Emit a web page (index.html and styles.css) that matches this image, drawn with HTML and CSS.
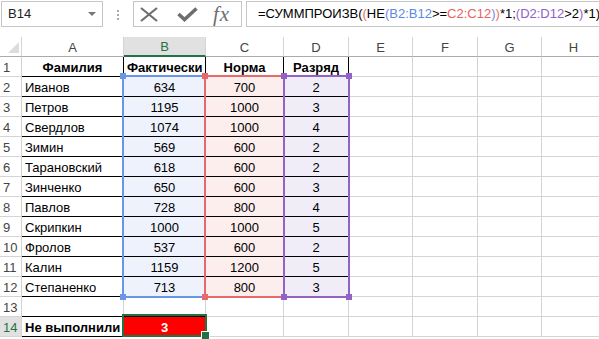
FILE: index.html
```html
<!DOCTYPE html>
<html>
<head>
  <meta charset="utf-8">
  <link rel="stylesheet" href="styles.css">
</head>
<body>
  <div class="formula-bar">
    <div class="name-box">B14<span class="drop"></span></div>
    <div class="grip"><i></i><i></i><i></i></div>
    <div class="buttons">
      <svg class="icon-x" width="18" height="15" viewBox="0 0 18 15"><path d="M1 1 L17 14 M17 1 L1 14" stroke="#6e6e6e" stroke-width="2.2" fill="none"/></svg>
      <svg class="icon-ok" width="21" height="15" viewBox="0 0 21 15"><path d="M1.5 7 L7.5 12.5 L19.5 1.5" stroke="#6e6e6e" stroke-width="3.6" fill="none"/></svg>
      <span class="fx">fx</span>
    </div>
    <div class="formula">=СУММПРОИЗВ(<span class="p1">(</span>НЕ<span class="p2">(</span><span class="rb">B2:B12</span>&gt;=<span class="rc">C2:C12</span><span class="p2">)</span><span class="p1">)</span>*1;<span class="p3">(</span><span class="rd">D2:D12</span>&gt;2<span class="p3">)</span>*1)</div>
  </div>

  <div class="sheet-wrap">
    <table class="sheet">
      <colgroup>
        <col class="w-rh"><col class="w-a"><col class="w-b"><col class="w-c"><col class="w-d">
        <col class="w-e"><col class="w-f"><col class="w-g"><col class="w-h">
      </colgroup>
      <tr>
        <th class="corner"></th><th class="col">A</th><th class="col sel">B</th><th class="col">C</th><th class="col">D</th>
        <th class="col">E</th><th class="col">F</th><th class="col">G</th><th class="col">H</th>
      </tr>
      <tr>
        <td class="rh">1</td><td class="bx b c">Фамилия</td><td class="bx b c">Фактически</td><td class="bx b c">Норма</td><td class="bx b c">Разряд</td>
        <td></td><td></td><td></td><td></td>
      </tr>
      <tr>
        <td class="rh">2</td><td class="bx">Иванов</td><td class="bx c fb">634</td><td class="bx c fc">700</td><td class="bx c fd">2</td>
        <td></td><td></td><td></td><td></td>
      </tr>
      <tr>
        <td class="rh">3</td><td class="bx">Петров</td><td class="bx c fb">1195</td><td class="bx c fc">1000</td><td class="bx c fd">3</td>
        <td></td><td></td><td></td><td></td>
      </tr>
      <tr>
        <td class="rh">4</td><td class="bx">Свердлов</td><td class="bx c fb">1074</td><td class="bx c fc">1000</td><td class="bx c fd">4</td>
        <td></td><td></td><td></td><td></td>
      </tr>
      <tr>
        <td class="rh">5</td><td class="bx">Зимин</td><td class="bx c fb">569</td><td class="bx c fc">600</td><td class="bx c fd">2</td>
        <td></td><td></td><td></td><td></td>
      </tr>
      <tr>
        <td class="rh">6</td><td class="bx">Тарановский</td><td class="bx c fb">618</td><td class="bx c fc">600</td><td class="bx c fd">2</td>
        <td></td><td></td><td></td><td></td>
      </tr>
      <tr>
        <td class="rh">7</td><td class="bx">Зинченко</td><td class="bx c fb">650</td><td class="bx c fc">600</td><td class="bx c fd">3</td>
        <td></td><td></td><td></td><td></td>
      </tr>
      <tr>
        <td class="rh">8</td><td class="bx">Павлов</td><td class="bx c fb">728</td><td class="bx c fc">800</td><td class="bx c fd">4</td>
        <td></td><td></td><td></td><td></td>
      </tr>
      <tr>
        <td class="rh">9</td><td class="bx">Скрипкин</td><td class="bx c fb">1000</td><td class="bx c fc">1000</td><td class="bx c fd">5</td>
        <td></td><td></td><td></td><td></td>
      </tr>
      <tr>
        <td class="rh">10</td><td class="bx">Фролов</td><td class="bx c fb">537</td><td class="bx c fc">600</td><td class="bx c fd">2</td>
        <td></td><td></td><td></td><td></td>
      </tr>
      <tr>
        <td class="rh">11</td><td class="bx">Калин</td><td class="bx c fb">1159</td><td class="bx c fc">1200</td><td class="bx c fd">5</td>
        <td></td><td></td><td></td><td></td>
      </tr>
      <tr>
        <td class="rh">12</td><td class="bx">Степаненко</td><td class="bx c fb">713</td><td class="bx c fc">800</td><td class="bx c fd">3</td>
        <td></td><td></td><td></td><td></td>
      </tr>
      <tr>
        <td class="rh">13</td><td class="bt"></td><td class="bt"></td><td></td><td></td>
        <td></td><td></td><td></td><td></td>
      </tr>
      <tr>
        <td class="rh sel">14</td><td class="bx b">Не выполнили</td><td class="bx red">3</td><td></td><td></td>
        <td></td><td></td><td></td><td></td>
      </tr>
    </table>

    <div class="range blue"><i class="tl"></i><i class="tr"></i><i class="bl"></i><i class="br"></i></div>
    <div class="range red-range"><i class="tl"></i><i class="tr"></i><i class="bl"></i><i class="br"></i></div>
    <div class="range purple"><i class="tl"></i><i class="tr"></i><i class="bl"></i><i class="br"></i></div>
    <div class="selection"></div>
  </div>
</body>
</html>
```

FILE: styles.css
```css
* {
  box-sizing: border-box;
}

body {
  margin: 0;
  width: 599px;
  height: 339px;
  overflow: hidden;
  background: #fff;
  font-family: "Liberation Sans", Arial, sans-serif;
  font-size: 13px;
  color: #000;
}

/* formula bar */
.formula-bar {
  display: flex;
  align-items: flex-start;
  height: 37px;
  padding: 1px 0 0 1px;
}

.name-box {
  position: relative;
  flex-shrink: 0;
  width: 102px;
  height: 26px;
  border: 1px solid #c6c6c6;
  padding-left: 6px;
  line-height: 24px;
  color: #222;
}

.drop {
  position: absolute;
  left: 86px;
  top: 10px;
  border-left: 4px solid transparent;
  border-right: 4px solid transparent;
  border-top: 4px solid #777;
}

.grip {
  flex-shrink: 0;
  width: 30px;
  display: flex;
  flex-direction: column;
  align-items: center;
  gap: 2px;
  padding-top: 9px;
}

.grip i {
  width: 2px;
  height: 2px;
  background: #a8a8a8;
}

.buttons {
  flex-shrink: 0;
  width: 109px;
  height: 26px;
  border: 1px solid #c6c6c6;
  display: flex;
  align-items: center;
}

.icon-x {
  margin-left: 6px;
}

.icon-ok {
  margin-left: 19px;
}

.fx {
  margin-left: 15px;
  font-family: "Liberation Serif", serif;
  font-style: italic;
  font-size: 21px;
  letter-spacing: 1px;
  color: #6e6e6e;
  line-height: 24px;
}

.formula {
  flex-shrink: 0;
  width: 380px;
  height: 26px;
  margin-left: 4px;
  border: 1px solid #c6c6c6;
  padding-left: 11px;
  line-height: 24px;
  white-space: nowrap;
  color: #000;
}

.p1 { color: #e46f6d; }
.p2 { color: #7f83e3; }
.p3 { color: #9a66cc; }
.rb { color: #5b88e8; }
.rc { color: #ea5f5f; }
.rd { color: #9060c8; }

/* sheet */
.sheet-wrap {
  position: relative;
}

.sheet {
  border-collapse: separate;
  border-spacing: 0;
  table-layout: fixed;
  width: 606px;
}

.w-rh { width: 22px; }
.w-a { width: 102px; }
.w-b { width: 82px; }
.w-c { width: 78px; }
.w-d { width: 65px; }
.w-e { width: 64px; }
.w-f { width: 65px; }
.w-g { width: 64px; }
.w-h { width: 64px; }

.sheet td,
.sheet th {
  height: 20px;
  padding: 2px 3px 0;
  line-height: 17px;
  border-right: 1px solid #d4d4d4;
  border-bottom: 1px solid #d4d4d4;
  white-space: nowrap;
  overflow: hidden;
  text-align: left;
  font-weight: normal;
}

.sheet th.col {
  text-align: center;
  color: #444;
  padding-top: 1px;
  border-bottom-color: #ababab;
}

.sheet th.sel {
  background: #e1e1e1;
  color: #217346;
  border-bottom: 2px solid #217346;
}

.sheet th.corner {
  position: relative;
  border-bottom-color: #ababab;
}

.corner::after {
  content: "";
  position: absolute;
  right: 2px;
  bottom: 3px;
  border-left: 11px solid transparent;
  border-bottom: 11px solid #dcdcdc;
}

.sheet td.rh {
  color: #444;
  padding-left: 3px;
}

.sheet td.rh.sel {
  background: #e1e1e1;
  color: #217346;
}

.sheet td.bx {
  border-right-color: #000;
  border-bottom-color: #000;
}

.sheet td.bt {
  border-bottom-color: #000;
}

.sheet .c { text-align: center; }
.sheet .b { font-weight: bold; }

.fb { background: #edf2fc; }
.fc { background: #fdeeee; }
.fd { background: #f1edf8; }

.sheet td.red {
  background: #ff0000;
  color: #fff;
  font-weight: bold;
  text-align: center;
}

/* highlighted formula ranges */
.range {
  position: absolute;
  top: 38px;
  height: 223px;
  border: 2px solid;
}

.range i {
  position: absolute;
  width: 6px;
  height: 6px;
  background: currentColor;
}

.range .tl { left: -4px; top: -4px; }
.range .tr { right: -4px; top: -4px; }
.range .bl { left: -4px; bottom: -4px; }
.range .br { right: -4px; bottom: -4px; }

.blue {
  left: 122px;
  width: 84px;
  color: #6b95e6;
  border-color: #6b95e6;
}

.red-range {
  left: 204px;
  width: 81px;
  color: #e8696c;
  border-color: #e8696c;
}

.purple {
  left: 283px;
  width: 67px;
  color: #9263c4;
  border-color: #9263c4;
}

.selection {
  position: absolute;
  left: 122px;
  top: 277px;
  width: 85px;
  height: 23px;
  border: 2px solid #217346;
}

.selection::after {
  content: "";
  position: absolute;
  right: -5px;
  bottom: -5px;
  width: 7px;
  height: 7px;
  background: #217346;
  border: 1px solid #fff;
}
```
